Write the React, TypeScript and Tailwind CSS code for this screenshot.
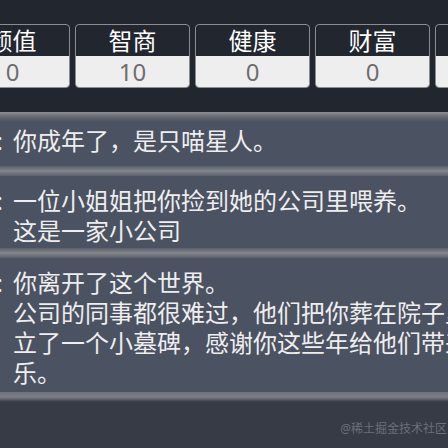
const stats = [
  { name: "颜值", value: 0 },
  { name: "智商", value: 10 },
  { name: "健康", value: 0 },
  { name: "财富", value: 0 },
  { name: "快乐", value: 0 },
];

const events = [
  { age: "18岁:", lines: ["你成年了，是只喵星人。"], pad: "pt-[4px] pb-[10px]" },
  { age: "19岁:", lines: ["一位小姐姐把你捡到她的公司里喂养。", "这是一家小公司"], pad: "pt-[10px] pb-[2px]" },
  {
    age: "20岁:",
    lines: ["你离开了这个世界。", "公司的同事都很难过，他们把你葬在院子里，立了一个小墓碑，感谢你这些年给他们带来快乐。"],
    pad: "pt-[10px] pb-[4px]",
  },
];

function StatBox({ name, value }: { name: string; value: number }) {
  return (
    <div className="w-[115px] h-[64px] shrink-0 flex flex-col rounded-[4px] border border-[#8b8d92] overflow-hidden">
      <div className="h-[31px] flex items-center justify-center text-white text-[24px] leading-none">{name}</div>
      <div className="flex-1 flex items-center justify-center bg-[#eeeeee] text-[#6e6e6e] text-[24px] leading-none">
        {value}
      </div>
    </div>
  );
}

function Band({ kind }: { kind: "top" | "mid" | "bottom" }) {
  if (kind === "top")
    return <div className="h-[10px] bg-gradient-to-b from-[#8d8f94] via-[#63676f] to-[#4b5262]" />;
  if (kind === "bottom")
    return <div className="h-[10px] bg-gradient-to-b from-[#6c7079] via-[#7d8085] to-[#373b45]" />;
  return <div className="h-[10px] bg-gradient-to-b from-[#5a606c] via-[#84868b] to-[#5a606c]" />;
}

export default function App() {
  return (
    <div
      className="relative w-[448px] h-[448px] overflow-hidden bg-[#373b45]"
      style={{ fontFamily: '"Noto Sans", "Noto Sans CJK SC", sans-serif' }}
    >
      <div className="bg-[#22262f] pt-[24px] pb-[24px]">
        <div className="flex gap-[5px] -ml-[45px]">
          {stats.map((s) => (
            <StatBox key={s.name} name={s.name} value={s.value} />
          ))}
        </div>
      </div>

      <div className="-ml-[80px] w-[583px]">
        <Band kind="top" />
        {events.map((e, i) => (
          <div key={e.age}>
            {i > 0 && <Band kind="mid" />}
            <div className={`flex bg-[#4b5262] text-[#eeeeee] text-[24px] leading-[30px] ${e.pad}`}>
              <div className="w-[93px] shrink-0 pr-[10px] text-right">{e.age}</div>
              <div className="w-[490px]">
                {e.lines.map((l) => (
                  <div key={l}>{l}</div>
                ))}
              </div>
            </div>
          </div>
        ))}
        <Band kind="bottom" />
      </div>

      <div className="absolute right-[1px] bottom-[10px] text-[12px] text-[#6b6f78]">@稀土掘金技术社区</div>
    </div>
  );
}
